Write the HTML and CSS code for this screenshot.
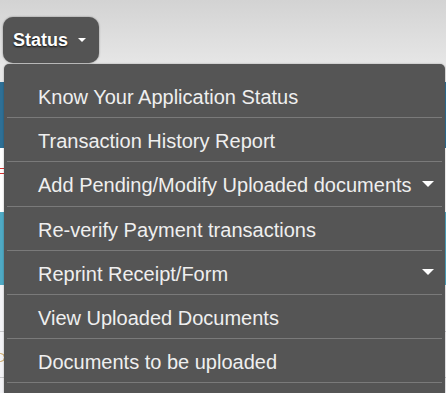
FILE: index.html
```html
<!DOCTYPE html>
<html lang="en">
<head>
<meta charset="utf-8">
<title>Status menu</title>
<link rel="stylesheet" href="styles.css">
</head>
<body>
<div class="topbar">
  <button class="status-btn" type="button">Status <span class="caret"></span></button>
</div>
<div class="page">
  <div class="gap-top"></div>
  <div class="band-blue"></div>
  <div class="white-a"><div class="red-mark"></div></div>
  <div class="band-teal"></div>
  <div class="list-area">
    <div class="row"></div>
    <div class="row row-dot"><span class="dot"></span></div>
  </div>
</div>
<ul class="dropdown">
  <li class="item">Know Your Application Status</li>
  <li class="item">Transaction History Report</li>
  <li class="item has-sub">Add Pending/Modify Uploaded documents <span class="sub-caret"></span></li>
  <li class="item">Re-verify Payment transactions</li>
  <li class="item has-sub">Reprint Receipt/Form <span class="sub-caret"></span></li>
  <li class="item">View Uploaded Documents</li>
  <li class="item">Documents to be uploaded</li>
</ul>
</body>
</html>
```
FILE: styles.css
```css
html, body {
  margin: 0;
  padding: 0;
}
body {
  width: 446px;
  height: 393px;
  overflow: hidden;
  position: relative;
  font-family: "Liberation Sans", Arial, sans-serif;
  background: #f3f3f6;
}
.topbar {
  height: 64px;
  box-sizing: border-box;
  padding: 17px 0 0 3px;
  background: linear-gradient(#d3d3d3, #e6e6e6);
}
.status-btn {
  display: flex;
  align-items: center;
  width: 96px;
  height: 46px;
  margin: 0;
  padding: 0 0 0 10px;
  border: none;
  border-radius: 10px;
  background: #545454;
  box-shadow: 0 0 2px rgba(0, 0, 0, 0.45);
  color: #fff;
  font-family: "Liberation Sans", Arial, sans-serif;
  font-size: 18px;
  font-weight: bold;
  line-height: 20px;
  text-shadow: 0 1px 2px rgba(0, 0, 0, 0.85);
}
.caret {
  display: inline-block;
  width: 0;
  height: 0;
  margin-left: 10px;
  border-left: 4.5px solid transparent;
  border-right: 4.5px solid transparent;
  border-top: 4.5px solid #fff;
}
.gap-top {
  height: 18px;
  background: #e8e8e8;
}
.band-blue {
  height: 66px;
  background: #2e6f95;
}
.white-a {
  height: 64px;
  background: #fff;
  padding-top: 20px;
  box-sizing: border-box;
}
.red-mark {
  width: 10px;
  height: 4px;
  border-top: 1.5px solid #d63232;
  border-bottom: 1.5px solid #d63232;
}
.band-teal {
  height: 73px;
  background: #4fa9c4;
}
.list-area {
  padding-top: 46px;
}
.row {
  height: 45px;
  border-top: 1px solid #c9c9cc;
  position: relative;
}
.row-dot {
  height: 0;
}
.dot {
  position: absolute;
  left: -4px;
  top: -25px;
  width: 7px;
  height: 7px;
  border-radius: 50%;
  border: 1px solid #c9a25a;
}
.dropdown {
  position: absolute;
  top: 64px;
  left: 3.5px;
  width: 441.5px;
  height: 329px;
  box-sizing: border-box;
  margin: 0;
  padding: 10px 3.5px 0;
  list-style: none;
  background: #555555;
  border-radius: 5px 5px 0 0;
  box-shadow: 0 0 2px rgba(0, 0, 0, 0.35);
}
.item {
  display: flex;
  align-items: center;
  justify-content: space-between;
  padding: 11px 8px 8.2px 31px;
  line-height: 24px;
  font-size: 20px;
  color: #efefef;
  border-bottom: 1px solid #7a7a7a;
  white-space: nowrap;
}
.sub-caret {
  width: 0;
  height: 0;
  margin-bottom: 3px;
  border-left: 6px solid transparent;
  border-right: 6px solid transparent;
  border-top: 6px solid #fff;
}
```
